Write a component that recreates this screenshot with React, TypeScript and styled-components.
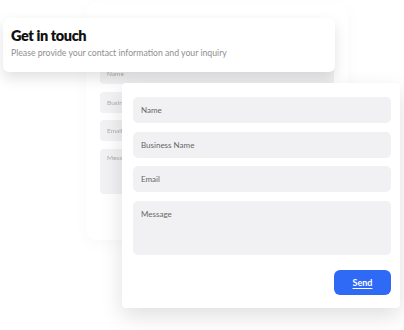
import styled, { createGlobalStyle } from "styled-components";

const GlobalStyle = createGlobalStyle`
    html, body {
        margin: 0;
        padding: 0;
        background: #ffffff;
    }
    body {
        font-family: Lato, "Open Sans", sans-serif;
        color: #1a1a1a;
    }
`;

const fields = ["Name", "Business Name", "Email"];

export default function App() {
    return (
        <>
            <GlobalStyle />
            <Stage>
                {/* faded copy of the form sitting behind */}
                <BackCard>
                    {fields.map((label) => (
                        <BackField key={label}>{label}</BackField>
                    ))}
                    <BackField $tall>Message</BackField>
                </BackCard>

                <HeaderCard>
                    <Title>Get in touch</Title>
                    <Subtitle>
                        Please provide your contact information and your inquiry
                    </Subtitle>
                </HeaderCard>

                <FormCard>
                    <FieldList>
                        {fields.map((label) => (
                            <Field key={label} placeholder={label} />
                        ))}
                        <MessageField placeholder="Message" />
                    </FieldList>
                    <Actions>
                        <SendButton type="button">Send</SendButton>
                    </Actions>
                </FormCard>
            </Stage>
        </>
    );
}

const Stage = styled.div`
    width: 404px;
    height: 330px;
    display: grid;
    overflow: hidden;
    & > * {
        grid-area: 1 / 1;
        align-self: start;
        justify-self: start;
    }
`;

const BackCard = styled.div`
    position: relative;
    z-index: 0;
    margin: 3px 0 0 86px;
    width: 262px;
    height: 237px;
    box-sizing: border-box;
    padding: 60px 14px 0 14px;
    display: flex;
    flex-direction: column;
    gap: 7.5px;
    background: #fff;
    border-radius: 10px;
    box-shadow: 0 4px 16px rgba(0, 0, 0, 0.06);
    opacity: 0.5;
    filter: blur(0.6px);
`;

const BackField = styled.div<{ $tall?: boolean }>`
    height: ${(p) => (p.$tall ? "45px" : "21px")};
    background: #e6e6ea;
    border-radius: 4px;
    box-sizing: border-box;
    padding: ${(p) => (p.$tall ? "5px 7px" : "0 7px")};
    display: flex;
    align-items: ${(p) => (p.$tall ? "flex-start" : "center")};
    font-size: 6.5px;
    color: #555;
`;

const HeaderCard = styled.div`
    position: relative;
    z-index: 1;
    margin: 18px 0 0 3px;
    width: 332px;
    height: 54px;
    box-sizing: border-box;
    padding: 9px 8px 0 8px;
    background: #fff;
    border-radius: 6px;
    box-shadow: 0 6px 14px rgba(0, 0, 0, 0.12);
`;

const Title = styled.h1`
    margin: 0;
    font-size: 14.5px;
    line-height: 18px;
    font-weight: 800;
    color: #111;
    letter-spacing: -0.4px;
`;

const Subtitle = styled.p`
    margin: 2px 0 0;
    font-size: 8.7px;
    line-height: 12px;
    color: #8f8f8f;
`;

const FormCard = styled.div`
    position: relative;
    z-index: 2;
    margin: 83px 0 0 122px;
    width: 278px;
    height: 225px;
    box-sizing: border-box;
    padding: 14px 9px 14px 11px;
    background: #fff;
    border-radius: 4px;
    box-shadow: 0 8px 22px rgba(0, 0, 0, 0.13);
    display: flex;
    flex-direction: column;
`;

const FieldList = styled.div`
    display: flex;
    flex-direction: column;
    gap: 8.5px;
`;

const Field = styled.input`
    height: 26px;
    box-sizing: border-box;
    border: none;
    outline: none;
    border-radius: 5px;
    background: #f1f1f3;
    padding: 0 8px;
    font-family: Lato, "Open Sans", sans-serif;
    font-size: 8px;
    color: #333;
    &::placeholder {
        color: #666;
    }
`;

const MessageField = styled.textarea`
    height: 54px;
    box-sizing: border-box;
    border: none;
    outline: none;
    resize: none;
    border-radius: 5px;
    background: #f1f1f3;
    padding: 8px 8px;
    font-family: Lato, "Open Sans", sans-serif;
    font-size: 8px;
    color: #333;
    &::placeholder {
        color: #666;
    }
`;

const Actions = styled.div`
    margin-top: 15px;
    display: flex;
    justify-content: flex-end;
`;

const SendButton = styled.button`
    width: 57px;
    height: 25px;
    border: none;
    border-radius: 6px;
    background: #2f6af6;
    color: #fff;
    font-family: Lato, "Open Sans", sans-serif;
    font-size: 9px;
    font-weight: 700;
    text-decoration: underline;
    text-underline-offset: 2px;
    cursor: pointer;
`;
